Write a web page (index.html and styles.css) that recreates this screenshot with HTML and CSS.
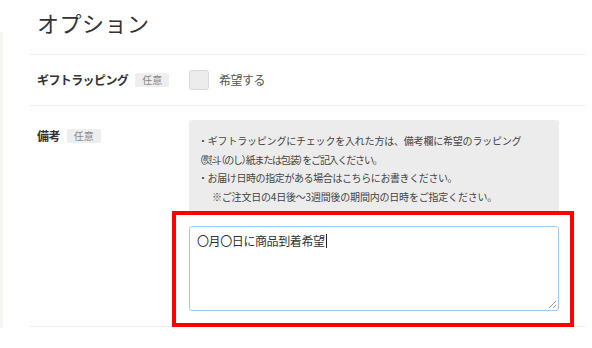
FILE: index.html
```html
<!DOCTYPE html>
<html lang="ja">
<head>
<meta charset="utf-8">
<title>オプション</title>
<link rel="stylesheet" href="styles.css">
</head>
<body>
<div class="edge"></div>
<main class="page">
  <h2 class="title">オプション</h2>
  <div class="row row-gift">
    <div class="label"><span class="label-text">ギフトラッピング</span><span class="badge">任意</span></div>
    <div class="field field-check">
      <span class="checkbox"></span><span class="check-text">希望する</span>
    </div>
  </div>
  <div class="row row-notes">
    <div class="label label-notes"><span class="label-text">備考</span><span class="badge">任意</span></div>
    <div class="field field-notes">
      <div class="notice">
        <p class="l1">・ギフトラッピングにチェックを入れた方は、備考欄に希望のラッピング</p>
        <p class="l2"><span class="p">（</span>熨斗<span class="p">（</span>のし<span class="p">）</span>紙または包装<span class="p">）</span>をご記入ください。</p>
        <p class="l3">・お届け日時の指定がある場合はこちらにお書きください。</p>
        <p class="l4">※ご注文日の4日後～3週間後の期間内の日時をご指定ください。</p>
      </div>
      <div class="textarea">〇月〇日に商品到着希望<span class="caret"></span><span class="grip"></span></div>
    </div>
    <div class="highlight"></div>
  </div>
</main>
</body>
</html>
```
FILE: styles.css
```css
* { box-sizing: border-box; }
html, body { margin: 0; padding: 0; background: #fff; }
body {
  font-family: "Noto Sans CJK JP", "Noto Sans", sans-serif;
  color: #333;
  width: 592px;
  height: 348px;
  overflow: hidden;
  position: relative;
}
.edge {
  position: absolute;
  left: 0;
  top: 32px;
  width: 3px;
  height: 296px;
  background: #f7f5ef;
}
.page {
  margin-left: 30px;
  width: 555px;
}
.title {
  margin: 0;
  height: 55px;
  padding: 6px 0 0 7px;
  font-size: 22px;
  font-weight: 400;
  line-height: 32px;
  color: #333;
  letter-spacing: 0.5px;
  border-bottom: 1px solid #ececec;
}
.row {
  display: flex;
  border-bottom: 1px solid #ececec;
  position: relative;
}
.row-gift {
  height: 51px;
  align-items: center;
}
.label {
  width: 159px;
  padding-left: 7px;
  display: flex;
  align-items: center;
  flex: none;
}
.label-text {
  font-size: 12px;
  font-weight: 700;
  color: #333;
  letter-spacing: -0.6px;
  line-height: 14px;
}
.badge {
  display: inline-block;
  margin-left: 7px;
  width: 34px;
  height: 14px;
  line-height: 14px;
  text-align: center;
  font-size: 10px;
  color: #888;
  background: #eeeeee;
  border-radius: 2px;
}
.field-check {
  display: flex;
  align-items: center;
  padding-bottom: 1px;
}
.checkbox {
  width: 20px;
  height: 20px;
  background: #ececec;
  border: 1px solid #d9d9d9;
  border-radius: 3px;
}
.check-text {
  margin-left: 10px;
  font-size: 12px;
  color: #555;
  letter-spacing: -0.5px;
}
.row-notes {
  padding: 14px 0 15px;
  height: 221px;
}
.label-notes {
  align-items: flex-start;
  padding-top: 9px;
}
.field-notes {
  width: 370px;
  display: flex;
  flex-direction: column;
}
.notice {
  background: #ececec;
  border-radius: 3px 3px 0 0;
  height: 91px;
  padding: 12px 8px 0 9px;
  font-size: 10px;
  color: #444;
}
.notice p {
  margin: 0;
  line-height: 18.5px;
  white-space: nowrap;
}
.notice .l1 { letter-spacing: -0.2px; }
.notice .l2 { letter-spacing: -1.2px; padding-left: 1px; }
.notice .l3 { letter-spacing: -0.4px; }
.notice .l4 { letter-spacing: -0.2px; padding-left: 14px; }
.notice .p { font-feature-settings: "palt"; }
.textarea {
  position: relative;
  margin-top: 15px;
  height: 85px;
  border: 1px solid #9fcbee;
  border-radius: 3px;
  padding: 6px 7px;
  font-size: 12px;
  line-height: 16px;
  color: #333;
  letter-spacing: -0.4px;
}
.caret {
  display: inline-block;
  width: 1px;
  height: 14px;
  background: #222;
  vertical-align: -2px;
  margin-left: 1px;
}
.grip {
  position: absolute;
  right: 2px;
  bottom: 2px;
  width: 7px;
  height: 7px;
  background: linear-gradient(135deg, transparent 45%, #999 45%, #999 55%, transparent 55%, transparent 75%, #999 75%, #999 85%, transparent 85%);
}
.highlight {
  position: absolute;
  left: 142px;
  top: 105px;
  width: 402px;
  height: 116px;
  border: 4px solid #ff0000;
  pointer-events: none;
}
```
